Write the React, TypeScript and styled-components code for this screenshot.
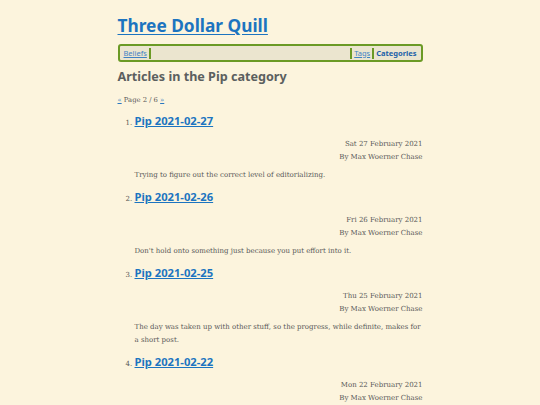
import React from "react"
import styled, { createGlobalStyle } from "styled-components"

const GlobalStyle = createGlobalStyle`
  html, body {
    margin: 0;
    padding: 0;
    background: #fcf4dd;
  }
  body {
    font-family: "DejaVu Serif", serif;
    color: #585858;
  }
`

const Page = styled.div`
  width: 305px;
  margin: 0 auto;
  padding-top: 14px;
  box-sizing: border-box;
`

const Title = styled.h1`
  margin: 0;
  font-family: "Noto Sans", sans-serif;
  font-size: 17.3px;
  font-weight: 700;
  line-height: 24px;
  a {
    color: #1c74c0;
    text-decoration: underline;
    text-underline-offset: 2px;
  }
`

const Nav = styled.nav`
  margin-top: 6px;
  display: flex;
  align-items: center;
  height: 12px;
  padding: 1px 2px;
  border: 2px solid #6b9a25;
  border-radius: 3px;
  background: #ebe5cf;
  font-family: "Noto Sans", sans-serif;
  font-size: 7.5px;
`

const NavLink = styled.a<{ $active?: boolean; $right?: boolean }>`
  padding: 0 2px;
  line-height: 11px;
  color: ${p => (p.$active ? "#1a5fa8" : "#3f82c4")};
  font-weight: ${p => (p.$active ? 700 : 400)};
  text-decoration: ${p => (p.$active ? "none" : "underline")};
  border-${p => (p.$right ? "left" : "right")}: 2px solid #6b9a25;
`

const Spacer = styled.div`
  flex: 1;
`

const Heading = styled.h2`
  margin: 6px 0 0;
  font-family: "Noto Sans", sans-serif;
  font-size: 12.6px;
  font-weight: 700;
  line-height: 18px;
  color: #5b5f5f;
`

const Pager = styled.p`
  margin: 9px 0 0;
  font-size: 6.8px;
  line-height: 10px;
  a {
    color: #2a78c0;
  }
`

const List = styled.ol`
  margin: 6px 0 0;
  padding-left: 17px;
  li::marker {
    font-size: 7px;
    color: #555;
  }
`

const Item = styled.li`
  margin-bottom: 5px;
`

const ItemTitle = styled.h3`
  margin: 0;
  font-family: "Noto Sans", sans-serif;
  font-size: 11.2px;
  font-weight: 700;
  line-height: 20px;
  a {
    color: #1c74c0;
    text-decoration: underline;
  }
`

const Meta = styled.div`
  margin-top: 7px;
  text-align: right;
  font-size: 7px;
  line-height: 12.5px;
`

const Summary = styled.p`
  margin: 6px 0 0;
  font-size: 7px;
  line-height: 13px;
`

const posts = [
  { title: "Pip 2021-02-27", date: "Sat 27 February 2021", summary: "Trying to figure out the correct level of editorializing." },
  { title: "Pip 2021-02-26", date: "Fri 26 February 2021", summary: "Don't hold onto something just because you put effort into it." },
  { title: "Pip 2021-02-25", date: "Thu 25 February 2021", summary: "The day was taken up with other stuff, so the progress, while definite, makes for a short post." },
  { title: "Pip 2021-02-22", date: "Mon 22 February 2021", summary: "" },
]

export default function App() {
  return (
    <>
      <GlobalStyle />
      <Page>
        <Title>
          <a href="#">Three Dollar Quill</a>
        </Title>
        <Nav>
          <NavLink href="#">Beliefs</NavLink>
          <Spacer />
          <NavLink href="#" $right>Tags</NavLink>
          <NavLink href="#" $right $active>Categories</NavLink>
        </Nav>
        <Heading>Articles in the Pip category</Heading>
        <Pager>
          <a href="#">«</a> Page 2 / 6 <a href="#">»</a>
        </Pager>
        <List>
          {posts.map(p => (
            <Item key={p.title}>
              <ItemTitle>
                <a href="#">{p.title}</a>
              </ItemTitle>
              <Meta>
                {p.date}
                <br />
                By Max Woerner Chase
              </Meta>
              {p.summary && <Summary>{p.summary}</Summary>}
            </Item>
          ))}
        </List>
      </Page>
    </>
  )
}
